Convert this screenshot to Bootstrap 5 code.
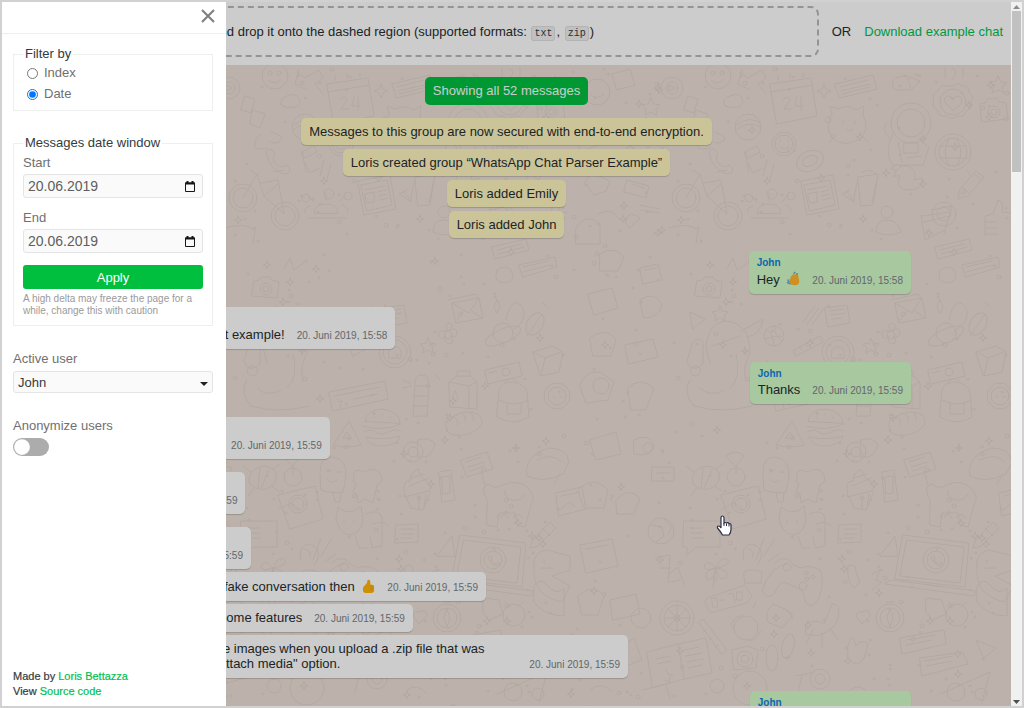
<!DOCTYPE html>
<html lang="en">
<head>
<meta charset="utf-8">
<meta name="viewport" content="width=device-width, initial-scale=1">
<title>WhatsApp Chat Parser</title>
<link href="https://cdn.jsdelivr.net/npm/bootstrap@5.3.0/dist/css/bootstrap.min.css" rel="stylesheet">
<style>
  body { font-family: "Liberation Sans", Arial, sans-serif; font-size: 13px; line-height: 15px; color: #262e30; }
  a { text-decoration: none; color: #00bf4f; }
  .frame { border: 2px solid #d1d1d1; }
  .page-area { background: #ebdfd6; }
  .topbar { background: #fff; padding: 4px 8px 8px; gap: 13px; height: 63px; }
  .dropzone { border: 2px dashed #bababa; border-radius: 8px; padding: 0 6px; height: 51px; cursor: pointer; }
  .dropzone code { font-family: "Liberation Mono", monospace; font-size: 10px; line-height: 12px; color: #353b45; background: #f0f0f0; border: 1px solid #e0e0e0; border-radius: 3px; padding: 1px 2px; margin: 0 1px; }
  .topbar a { color: #00bf4f; }
  .wallpaper { stroke: #e0d4cb; stroke-width: 1; fill: none; }
  .chat { max-width: 809px; padding-top: 12px; }
  .chat-note { border-radius: 5px; padding: 6px 8px; background: #fff5c0; box-shadow: 0 1px 1px #0000002e; }
  .show-all { background: #00bf3f; color: #fff; border: 0; border-radius: 5px; padding: 6px 8px 7px; margin-bottom: 13px; }
  .notes { gap: 4px; margin-bottom: 13px; }
  .bubble { border-radius: 5px; padding: 6px 8px 7px; background: #fff; box-shadow: 0 1px 1px #0000002e; max-width: 526px; }
  .bubble.mine { background: #d2fac8; }
  .bubble-row { gap: 12px; }
  .talk { gap: 13px; }
  .talk .turn { gap: 3px; }
  .sender { font-size: 10px; line-height: 12px; margin-bottom: 2px; font-weight: 700; color: #0f80dc; }
  .sender.loris { color: #d0660e; }
  .sender.emily { color: #8a3fc4; }
  .stamp { font-size: 10px; line-height: 13px; color: #7a8288; white-space: nowrap; }
  .emoji { width: 14px; height: 16px; margin-left: 3px; vertical-align: bottom; }
  .shade { background: rgba(0, 0, 0, .2); z-index: 2; }
  .drawer { width: 224px; z-index: 3; background: #fff; color: #707070; }
  .drawer-head { height: 32px; border-bottom: 1px solid #eee; padding: 0 11px 4px; }
  .drawer-body { padding: 12px 13px 7px 11px; }
  .panel { border: 1px solid #eee; padding: 0 9px; }
  .panel legend { float: none; width: auto; font-size: 13px; line-height: 16px; color: #333b40; padding: 0 2px; margin: 0; }
  .panel-short { padding-bottom: 6px; }
  .choice { height: 21px; gap: 6px; padding-left: 4px; }
  .choice input { width: 11px; height: 11px; margin: 1px 0 0; accent-color: #0075ff; }
  .field, .picker { width: 100%; height: 24px; background: #fafafa; border: 1px solid #e4e4e4; border-radius: 3px; }
  .field { font-size: 14px; color: #5e5e5e; padding: 0 4px; }
  .cal-btn { right: 5px; top: 5px; border: 0; background: none; padding: 0; width: 14px; height: 14px; }
  .cal-btn svg, .close-btn svg { display: block; }
  .apply { width: 100%; height: 24px; background: #00bf3f; color: #fff; border: 0; border-radius: 3px; margin-top: 12px; }
  .hint { font-size: 10px; line-height: 12px; color: #9a9a9a; }
  .picker { appearance: none; height: 22px; color: #333b40; padding: 0 4px; background: #fafafa url("data:image/svg+xml,%3Csvg xmlns='http://www.w3.org/2000/svg' width='8' height='4'%3E%3Cpath d='M0 0h8L4 4z' fill='%23222'/%3E%3C/svg%3E") no-repeat right 4px top 10px; }
  .drawer .toggle { width: 36px; height: 18px; margin: 0; border: 0; background-color: #acacac; background-image: url("data:image/svg+xml,%3Csvg xmlns='http://www.w3.org/2000/svg' viewBox='-4 -4 8 8'%3E%3Ccircle r='3.5' fill='%23fff'/%3E%3C/svg%3E"); }
  .close-btn { border: 0; background: none; padding: 0; }
  .group-gap { margin-top: 24px; }
  .outer-label { margin-top: 25px; margin-bottom: 5px; }
  .credits { font-size: 11px; color: #333b40; -webkit-text-stroke: .2px; }
  .scroller { width: 11px; background: #f1f1f1; padding-top: 3px; padding-bottom: 2px; }
  .scroller-thumb { width: 9px; height: 161px; background: #c1c1c1; margin-top: 2px; }
  .pointer { left: 714px; top: 513px; z-index: 4; }
</style>
</head>
<body>
<div class="frame vh-100 d-flex position-relative overflow-hidden">
  <div class="page-area flex-grow-1 d-flex flex-column position-relative overflow-hidden">
    <header class="topbar d-flex align-items-center flex-shrink-0">
      <div class="dropzone flex-grow-1 d-flex align-items-center text-nowrap overflow-hidden">
        <span>Click here to upload a file or drag and drop it onto the dashed region (supported formats: <code>txt</code>, <code>zip</code>)</span>
      </div>
      <span>OR</span>
      <a href="#" class="text-nowrap">Download example chat</a>
    </header>

    <div class="flex-grow-1 position-relative overflow-hidden">
      <svg class="wallpaper position-absolute top-0 start-0 w-100 h-100" aria-hidden="true">
        <defs>
          <pattern id="doodles" patternUnits="userSpaceOnUse" x="567" y="0" width="443" height="690">
            <g id="tile" stroke-linejoin="round" stroke-linecap="round">
              <g id="art" transform="translate(-569 -65)">
                <!-- faces, calendar, sweets -->
                <circle cx="718" cy="76" r="13"/><circle cx="713" cy="73" r="2"/><circle cx="722" cy="73" r="2"/><path d="M711 80q7 6 13-1"/>
                <circle cx="672" cy="88" r="11"/><circle cx="672" cy="88" r="6"/><path d="M669 85l6 3-6 3z"/>
                <path d="M651 98l3 6 6 1-4 4 1 6-6-3-6 3 1-6-4-4 6-1zM740 72l8 6 14-8 4 8-8 6 8 10M742 70l-4 14 12 6"/>
                <path d="M770 84l41-6 6 38-40 8zM771 92l42-7M778 80v-4M790 78v-4M803 77v-4M783 100q5-6 7 0l-6 9h8M797 97l-2 9h8M801 97v13"/>
                <path d="M835 84l38-9 4 14-37 9zM840 87l28-7M841 91l30-7M842 94l28-7M893 86q-3-8 6-9 8-3 10 5 5 7-4 8h-8q-4 0-4-4M904 75l16 6-10 10M824 84l2 5 5 2-5 2-2 5-2-5-5-2 5-2zM945 68v10M952 68q8 4 0 11M963 68v10"/>
                <path d="M953 86q5-5 9 0 7-1 7 6 6 4 2 10 2 7-5 9-2 7-9 5-6 5-11 0-8 1-9-6-6-4-3-10-3-7 4-9 2-7 10-5zM953 110l-8-7q-2-6 3-7 4 0 5 4 2-5 6-4 5 3 2 8z"/><circle cx="953" cy="102" r="13"/>
                <path d="M980 104l5-1 2-4 10-1 2 4 7 1 2 16-26 3z"/><circle cx="994" cy="112" r="6"/><circle cx="994" cy="112" r="3"/><path d="M998 76l3 6 6 1-5 4 2 6-6-3-6 3 2-7-5-4 7-1z"/>
                <circle cx="748" cy="127" r="13"/><path d="M737 125q12-10 23-2M736 130q12-10 24-3M730 96q8-4 12 2 3 6-3 9-8 2-14-1-4-7 5-10M688 96l10 3-4 14-10-3zM696 110l12 4-5 14-10-4zM704 134q-8 6-6 14 4 2 12 0M714 132q14 4 10 8-6 6-12 1"/>
                <circle cx="784" cy="144" r="12"/><circle cx="784" cy="144" r="9"/><path d="M779 147q5 4 10 0M780 140v2M788 140v2"/><ellipse cx="810" cy="161" rx="14" ry="10" transform="rotate(-24 810 161)"/><ellipse cx="810" cy="161" rx="8" ry="5" transform="rotate(-24 810 161)"/>
                <!-- cat, astronaut, ball -->
                <path d="M832 114l-2-8 8 3q10-5 18 1l8-4-1 9q8 16-5 25-15 8-26-2-8-13 0-24zM843 121v3M855 121v3M846 129q3 4 7 0M834 137l-5 6M862 136l6 6"/><circle cx="828" cy="120" r="3"/>
                <circle cx="911" cy="123" r="20"/><circle cx="911" cy="123" r="14"/><path d="M893 133q-10 22 0 32h30l6-18-8-6M898 142l4 20M904 143h14v10h-14zM887 122q-6 8 2 16M907 158l14-2"/>
                <circle cx="953" cy="152" r="18"/><circle cx="953" cy="152" r="14"/><path d="M940 146h26M940 158h27M949 139q-8 13 0 27M957 139q8 13 0 27"/>
                <path d="M710 156q-3-7 4-7l4 5-2 5q2 6 9 8l4-2 4 4q-1 7-9 4-11-5-14-17M745 152l12-6 3 6-12 6zM748 163l5 10 10-5M767 160l-4 16M774 164l-4 15M745 152l4 20"/>
                <path d="M801 181l32-6 6 34-32 6zM804 185l26-5 5 25-25 6zM807 190l20-4M808 194l9-2v10l-7 1zM821 192l8-2M822 196l8-2M823 200l8-2"/>
                <path d="M858 177l20-3-5 31-12 1zM858 180q-4 14-4 21l-8-10M878 176l-6 26M862 172q8-4 14 2M850 190l-8 4 12 8M894 176q3-12 14-10 10 5 6 14l8-2q2 12-14 12-14-1-8-14zM896 171l-5-3 4-2"/>
                <path d="M960 189l16-18 8 6-16 19-10 3zM974 174l8 6M962 187l7 6M967 171l4 5"/>
                <circle cx="686" cy="198" r="14"/><circle cx="686" cy="198" r="10"/><circle cx="728" cy="216" r="14"/><circle cx="728" cy="216" r="10"/><path d="M686 198l14-24 7 22 20 18-6-34-17 3M699 174l-6-4M717 172l10-2M707 196l14-12"/>
                <path d="M757 213q0-9 12-9t12 9zM748 213q-2-5 5-7M791 212q0-6-6-7M769 200v-7M757 202l-6-6M782 202l5-6M751 218h38"/><circle cx="772" cy="194" r="5"/><circle cx="749" cy="198" r="4"/><circle cx="791" cy="196" r="4"/>
                <path d="M627 180l22 6-3 12-22-6zM632 184l12 4M640 205l20 4M641 210l18 3M668 228q20-6 30 2l-2 14M640 218l-10 10q-8-6-2-12 4-4 12 2M585 182l7-9 18 8-4 10-12 4zM598 214q14-8 20 4"/>
                <path d="M922 216l28-4M924 222l26-6M921 215l4 25 20-10M932 210l20-4-8 28"/><circle cx="944" cy="214" r="12"/><circle cx="944" cy="214" r="7"/><circle cx="887" cy="212" r="6"/><path d="M876 232q0-12 11-12t14 12q-12 6-25 0M985 236v-20l8-2 5-14q6 1 4 12l8 1M985 222h10M986 228h12M986 234h12"/>
                <!-- cards, camera, letters -->
                <path d="M935 247l34-8 3 11-34 9zM940 250l24-6M941 254l26-7M962 265l36-8 2 10-34 10zM966 267l26-6M966 272l28-7M940 270q8-6 14 0 6 10-5 13-14 0-9-13M697 281l5-1 2-3h9l2 3 7 2-2 16-25-2zM727 268l6-10 4 12 10-7M640 268l18-4 4 16-19 4zM645 270l11-2M600 254q14-9 24 3l-6 14h-18z"/><circle cx="709" cy="289" r="6"/><circle cx="709" cy="289" r="3"/>
                <path d="M720 306l2 5 6 1-4 4 1 5-5-3-5 3 1-5-4-4 6-1zM690 312l15 7-12 10zM803 322l12-16M807 324l12-16M812 325l11-16M825 308l22-3 3 18-22 4zM830 311l14-2M831 315l14-2M832 319l9-1"/>
                <path d="M895 303l27-5 4 20-27 5zM895 303l17 10 10-15M891 300l27-6 3 4M900 320l8-10M915 311l10 7M937 307l3-8 3 8-3 6zM949 320q2-14 10-18 9 4 8 14-2 10-12 14"/>
                <ellipse cx="946" cy="336" rx="19" ry="7" transform="rotate(-24 946 336)"/><circle cx="946" cy="333" r="10"/><ellipse cx="978" cy="324" rx="8" ry="12" transform="rotate(30 978 324)"/><path d="M970 336l15-22M985 302l5 5"/>
                <circle cx="891" cy="335" r="4"/><path d="M891 331q-5-8 2-8 5 2-1 8 8-5 8 2-1 6-7 3 6 7-1 8-6-2-3-8-6 5-7-1-1-6 7-4M871 338l2 5 6 1-4 4 1 5-5-3-5 3 1-5-4-4 6-1z"/>
                <circle cx="774" cy="336" r="10"/><path d="M766 330q8 2 8 16M765 339q9-4 17-3M774 326q1 10 8 15"/><circle cx="838" cy="352" r="16"/><circle cx="838" cy="352" r="12"/><path d="M832 350q6-7 12 0v8h-12zM794 350l26-14 3 6-27 14zM800 347l2 3M806 344l2 3M812 341l2 3"/>
                <path d="M706 347q2-24 20-26 24 2 24 32-8 14-4 28M712 346l28-10M706 347l4 16M741 331l22-12q-2 16-16 18M693 342q6-6 10 0v22q-10 10-16-2zM695 366a5 5 0 1 0 1 10 5 5 0 0 0-1-10M690 380q-8 12 4 26 28 8 58 0M736 354q6 24-6 34M700 388q10 10 24 2"/>
                <path d="M976 352l20-6 10 6-4 20-18 4zM976 352l12 6 16-6M988 358l-4 18M928 370l34-8 3 14-34 8zM932 373l8-2"/><circle cx="949" cy="372" r="4"/>
                <path d="M942 390q2-8 14-8 12 2 14 10l2 25q-16 10-32 0zM942 400q14 8 30 0M950 404v10h14v-11M948 383q4-8 12-2"/><circle cx="1000" cy="396" r="13"/><circle cx="1000" cy="396" r="9"/><path d="M996 397h2M1003 397h2"/>
                <!-- food -->
                <path d="M772 392l56-11 3 18-55 12zM777 396l46-9M797 399l24-5M780 398l2 4 4-1-3 3 1 4M865 375q7 0 7 9l-2 32h-14l2-32q0-9 7-9M858 386h14M857 396h14M856 406h14M846 380l8 4M846 388l8-2M878 374l5 6"/>
                <path d="M892 382l8-6h14l6 7v26l-27-2zM892 382l20 4 8-4M912 386v23M898 391l-3 7q3 5 6 0zM900 376v-5h13v5"/>
                <path d="M808 421q2-12 18-12 17 3 17 14zM806 426q20 6 38-2M807 432q8-4 12 0t12 0 12-1M809 437q18 4 34-1-2 9-17 10-15 0-17-9M817 417v1M825 414v1M833 417v1"/>
                <path d="M889 428q-2-8 8-12 12-7 24-2 7 6 2 13-10 10-26 8-8-2-8-7M898 417q4 5 2 8M906 414q4 5 2 8M914 413q4 5 2 8M776 445l16-24 12 24q-14 4-28 0M786 438l4-6 4 6zM861 440q10-4 17 4-4 15-14 13-6-6-3-17"/><circle cx="856" cy="452" r="10"/><circle cx="856" cy="452" r="5"/>
                <!-- ice cream, bear, cupcake -->
                <path d="M763 472q0-16 13-15 14 2 13 19l-3 16q-12 2-22-2zM776 492l2 10h5l1-9M770 470h4M780 472h4M770 479q5 6 10 1M797 478q-2-7 5-8 4 2 6 2 8-6 15 1 5 8-3 12l-4 18-8-4-7 4-1-9-4-2 3-8q-4-2-2-6"/>
                <path d="M847 489q-1-8 6-8 0-8 8-12 3 10 10 13 5 6 0 9l-23 6zM848 495l6 13 12 2 8-19M852 486l20-8M854 478l13-4M862 496v13M869 494l-2 13M882 472l12-2 4 30-13 2zM885 477l8-1v17l-7 1zM904 460l26-8 6 17-26 8zM909 462l15-5M911 467l17-5M913 471l14-5"/>
                <path d="M970 476q-4-20 22-28 18 0 20 14l-6 12q-20 10-36 2M980 460q16-8 24 2M1003 474l-6 10M697 470q10-8 20 0 6 8-2 16-12 8-22-2-3-8 4-14M694 472l-8-6M715 470l8-6M714 486l8 5M697 488l-6 8M703 468l-2 20M712 470l-8 18M726 456q10-8 18 0l-8 10zM736 466v8"/><circle cx="736" cy="477" r="9"/><path d="M652 467h22v14h-22zM656 473h14"/>
                <path d="M721 495l37-9 8 33-33 10zM722 509l12-6 8 6"/><circle cx="741" cy="504" r="9"/><circle cx="741" cy="504" r="6"/><path d="M779 519l2-12 8 5 8-1 7-5 2 14q-2 14-14 15-10-2-13-16M787 521v2M797 520v2M809 514q14-6 16 4v28l-10 2-2-12M816 524q10-4 16 2M798 536l4 12h8"/>
                <path d="M930 500q-8-14 2-16 6 6 14 1 14-6 24 2 10 10 4 18l-6 22-8-2-2-12h-16l-2 14-10-2zM928 485l-4-14M948 490a10 8 0 1 0 20 4M944 518q2-7 8 0M956 518q4-7 10 0M999 493l26-6 4 22-27 7zM1004 496l19-4M1003 510l9-8 6 5"/>
                <circle cx="661" cy="531" r="13"/><path d="M652 525l10 2 2 9-8 6M664 519l8 8-4 8M684 521h36v26h-24l-9 8v-8h-4zM690 528h12M691 533h12M692 538h12M839 525l22-1v18l-23 1zM844 529h13M844 534h13M844 538h10M880 556l15-20 3 20z"/>
                <!-- laptop, gamepad -->
                <path d="M903 535l66 8-4 44-70-8zM907 540l57 7-4 36-60-7zM891 580l85 11-2 5-89-12zM924 584l18 3"/><circle cx="936" cy="560" r="13"/><circle cx="936" cy="560" r="9"/><path d="M931 558q1-4 4-1l-1 3q2 4 5 4l3-2 1 3q-7 3-12-7M976 540l17-18 6 6-18 18-8 2zM985 528l8 8M977 560q6-14 20-8l16 4v14l-18 6 18 10-8 16q-28-6-28-30zM984 568h12M987 560v3"/>
                <path d="M744 560q-4-14 8-16 12 4 9 14l-4 8M748 549q6 0 5 8M756 560l8-22M764 556l10-16M768 562l11-8M744 572q8-4 18 0l-1 11h-16zM775 564q4-8 14-4 4 6 12 8 10-4 20 3 3 14-2 27-6 12-13 5l-4-13-18-8q-6 2-9 11-8 8-13-2 8-25 25-27"/><circle cx="787" cy="567" r="4"/><circle cx="803" cy="586" r="4"/><circle cx="806" cy="573" r="2"/><circle cx="813" cy="577" r="2"/><path d="M848 566q8-4 8 6l4 10-6 6q-8-8-6-22M872 574l8-4-4 10 6 2-10 8"/>
                <path d="M655 558l15-3-2 28M660 568h10M668 575l10-8 6 18M670 582l10-2M716 568q-8-10-12-2 0 6 12 2-12 2-10 10 6 6 10-10 2 14 10 10 4-8-10-10 14-2 12-8-6-6-12 8M716 568l-3 20"/>
                <path d="M707 598l38-13 7 11-5 7-37 10-5-10zM712 598h5l1 9h-5zM720 600h4M728 594l5-1 2 10M737 592h5v8h-5zM753 608l3-6"/>
                <circle cx="677" cy="618" r="17"/><circle cx="677" cy="618" r="13"/><circle cx="677" cy="618" r="3"/><path d="M677 605v26M664 618h26M668 609l18 18M686 609l-18 18M699 622l4-3 24 31-5 4zM706 630l-3 2M712 638l-3 2M718 645l-3 2"/>
                <circle cx="746" cy="628" r="12"/><path d="M731 624q6-10 12-8M761 631q-6 12-14 9M731 624l4 8M773 604l14 6 5 6-10 12-14-6q-4-10 5-18M786 611q8 0 6 8M806 624q10-6 18 0l8-20q10 0 6 14-3 10-12 14-8 6-20 2zM814 628l-8 16M822 632v16M830 628l8 12"/>
                <circle cx="890" cy="618" r="14"/><circle cx="890" cy="618" r="10"/><path d="M890 609l3 9-3 9-3-9zM886 602h8M862 612q8-4 8 4l-8 8-6-8q1-6 6-4M926 598l16 2 4 14-14 6-6-8z"/><circle cx="957" cy="615" r="11"/><path d="M948 602l5 5M966 602l-5 5M977 586q6-10 14 0t16 2v28q-20 0-30-14z"/>
                <path d="M900 638l44-8 2 14-44 10zM906 640l30-5M906 645l26-5M920 658l43-6 5 12-46 12zM925 661l28-5M926 666l26-5M976 640l20 8-12 10zM848 646q4-16 8 0 6-8 12-2-2 8-4 14-6 12-16 0z"/>
                <path d="M647 652l31-8 28-6 6 35-28 6-31 9zM678 644l6 35M656 659l14-3M657 664l14-3M666 670l2 4 5 1-4 3 1 5-5-3M685 650l14-3M686 656l16-3M687 662l16-3M688 668l14-3M732 650l16-4 10 4-2 18-22 2z"/><circle cx="745" cy="659" r="8"/><circle cx="745" cy="659" r="4"/><ellipse cx="772" cy="658" rx="6" ry="13"/><ellipse cx="788" cy="646" rx="6" ry="12" transform="rotate(15 788 646)"/>
                <circle cx="820" cy="679" r="10"/><circle cx="820" cy="679" r="5"/><circle cx="750" cy="688" r="17"/><circle cx="717" cy="686" r="7"/><path d="M796 676l18-4M802 676l-4 16M940 694l50-22-8 30M642 690l24-6 4 14M850 690q10-8 20 4"/><circle cx="956" cy="692" r="9"/><circle cx="981" cy="694" r="6"/>
                <!-- items on the left of the tile -->
                <circle cx="597" cy="92" r="13"/><path d="M590 94q7 7 14 0M612 74l18-5 5 16-18 5zM575 134l20-8 6 18-20 7zM610 138l16-18 6 6-15 17zM576 228q10-16 24-4v20h-24zM588 294l24-6 6 20-24 7zM640 300q14-10 22 4-2 14-18 14zM590 338q16-12 26 2l-5 16h-18zM625 345l28-6 5 18-29 7zM580 386q4-16 20-14l14 10-6 18-22 3zM628 388q12-12 26 0l-8 22h-15zM590 440l26-8 5 22-25 6zM634 440q16-8 20 6-4 12-20 8zM578 490q16-16 30 0l-4 18h-20zM616 500q12-14 24-2l-6 16h-17zM580 545l32-6 6 27-32 7zM586 549l22-4M578 596q15-14 26 0l-6 19h-16zM610 600l26-6 4 20-27 6zM580 650q16-12 27 2l-6 17h-18zM615 650l19-12 8 22-19 7zM590 690q12-10 22 2"/><circle cx="641" cy="618" r="10"/><circle cx="601" cy="386" r="8"/><circle cx="648" cy="448" r="5"/>
                <g id="specks"></g>
              </g>
            </g>
            <use href="#art" x="-443"/><use href="#art" x="443"/>
          </pattern>
        </defs>
        <rect width="100%" height="100%" fill="url(#doodles)" stroke="none"/>
      </svg>

      <main class="chat mx-auto position-relative d-flex flex-column">
        <button type="button" class="show-all align-self-center">Showing all 52 messages</button>
        <div class="notes d-flex flex-column align-items-center">
          <div class="chat-note">Messages to this group are now secured with end-to-end encryption.</div>
          <div class="chat-note">Loris created group “WhatsApp Chat Parser Example”</div>
          <div class="chat-note">Loris added Emily</div>
          <div class="chat-note">Loris added John</div>
        </div>
        <div class="talk d-flex flex-column">
          <div class="bubble mine align-self-end">
            <div class="sender">John</div>
            <div class="bubble-row d-flex align-items-end"><span>Hey <svg class="emoji" viewBox="0 0 15 17" role="img" aria-label="waving hand"><path d="M6 5q1-2 3-1l1-1q3-1 3 2l1 4q1 5-3 6-4 1-7-2-2-2 0-3-1-2 1-2-1-2 1-3" fill="#ffb62a"/><path d="M8 3l2-2M12 4V2M2 9l1 3M1 12l4 2" stroke="#6aa5df" stroke-width="1.500" fill="none"/></svg></span><time class="stamp">20. Juni 2019, 15:58</time></div>
          </div>
          <div class="bubble align-self-start">
            <div class="sender loris">Loris</div>
            <div class="bubble-row d-flex align-items-end"><span>Welcome to the chat example!</span><time class="stamp">20. Juni 2019, 15:58</time></div>
          </div>
          <div class="bubble mine align-self-end">
            <div class="sender">John</div>
            <div class="bubble-row d-flex align-items-end"><span>Thanks</span><time class="stamp">20. Juni 2019, 15:59</time></div>
          </div>
          <div class="bubble align-self-start">
            <div class="sender emily">Emily</div>
            <div class="bubble-row d-flex align-items-end"><span>It works really well!</span><time class="stamp">20. Juni 2019, 15:59</time></div>
          </div>
          <div class="bubble align-self-start">
            <div class="sender loris">Loris</div>
            <div class="bubble-row d-flex align-items-end"><span>Yes!</span><time class="stamp">20. Juni 2019, 15:59</time></div>
          </div>
          <div class="turn d-flex flex-column align-items-start">
            <div class="bubble">
              <div class="sender emily">Emily</div>
              <div class="bubble-row d-flex align-items-end"><span>Okay</span><time class="stamp">20. Juni 2019, 15:59</time></div>
            </div>
            <div class="bubble">
              <div class="bubble-row d-flex align-items-end"><span>We can just have a fake conversation then <svg class="emoji" viewBox="0 0 15 17" role="img" aria-label="thumbs up"><path d="M4 8q3-2 3-6 3-1 3 2v3q4 0 4 2v5q-1 2-4 2H5q-3 0-3-4 0-3 2-4" fill="#ffb60a"/><path d="M10 9h3M10 11h3M10 13h3" stroke="#e59a00" stroke-width=".6"/></svg></span><time class="stamp">20. Juni 2019, 15:59</time></div>
            </div>
            <div class="bubble">
              <div class="bubble-row d-flex align-items-end"><span>I will tell you about some features</span><time class="stamp">20. Juni 2019, 15:59</time></div>
            </div>
            <div class="bubble">
              <div class="bubble-row d-flex align-items-end"><span>You can also see the images when you upload a .zip file that was exported with the "Attach media" option.</span><time class="stamp">20. Juni 2019, 15:59</time></div>
            </div>
          </div>
          <div class="bubble mine align-self-end">
            <div class="sender">John</div>
            <div class="bubble-row d-flex align-items-end"><span>Thanks</span><time class="stamp">20. Juni 2019, 15:59</time></div>
          </div>
        </div>
      </main>
    </div>
    <div class="shade position-absolute top-0 start-0 w-100 h-100"></div>
  </div>

  <div class="scroller d-flex flex-column align-items-center flex-shrink-0" aria-hidden="true">
    <svg width="7" height="4"><path d="M0 4h7L3.500 0z" fill="#8c8c8c"/></svg>
    <div class="scroller-thumb"></div>
    <svg class="mt-auto" width="7" height="4"><path d="M0 0h7L3.500 4z" fill="#505050"/></svg>
  </div>

  <aside class="drawer position-absolute top-0 start-0 h-100 d-flex flex-column">
    <div class="drawer-head d-flex align-items-center justify-content-end flex-shrink-0">
      <button type="button" class="close-btn" aria-label="Close menu"><svg width="14" height="14" stroke="#7d7d7d" stroke-width="2"><path d="M1 1l12 12M13 1L1 13"/></svg></button>
    </div>
    <form class="drawer-body flex-grow-1 d-flex flex-column">
      <fieldset class="panel panel-short">
        <legend>Filter by</legend>
        <div class="choice d-flex align-items-center"><input type="radio" name="filter" id="byIndex"><label for="byIndex">Index</label></div>
        <div class="choice d-flex align-items-center"><input type="radio" name="filter" id="byDate" checked><label for="byDate">Date</label></div>
      </fieldset>
      <fieldset class="panel group-gap pb-2">
        <legend>Messages date window</legend>
        <label for="start" class="d-block mt-1 mb-1">Start</label>
        <div class="position-relative">
          <input class="field" id="start" type="text" value="20.06.2019">
          <button type="button" class="cal-btn position-absolute" aria-label="Choose start date"><svg width="12" height="13" fill="none" stroke="#161616"><path d="M1.500 3v8.500h9V3z"/><path d="M1 3.500h10M3.500 1v2M8.500 1v2" stroke-width="2"/></svg></button>
        </div>
        <label for="end" class="d-block mt-2 pt-1 mb-1">End</label>
        <div class="position-relative">
          <input class="field" id="end" type="text" value="20.06.2019">
          <button type="button" class="cal-btn position-absolute" aria-label="Choose end date"><svg width="12" height="13" fill="none" stroke="#161616"><path d="M1.500 3v8.500h9V3z"/><path d="M1 3.500h10M3.500 1v2M8.500 1v2" stroke-width="2"/></svg></button>
        </div>
        <button type="button" class="apply">Apply</button>
        <div class="hint mt-1">A high delta may freeze the page for a while, change this with caution</div>
      </fieldset>
      <label for="user" class="outer-label">Active user</label>
      <select class="picker" id="user"><option>John</option><option>Emily</option><option>Loris</option></select>
      <label for="anon" class="outer-label">Anonymize users</label>
      <div class="form-switch p-0 m-0 lh-1"><input class="form-check-input toggle float-none d-block" type="checkbox" role="switch" id="anon"></div>
      <div class="credits mt-auto">
        <div>Made by <a href="#">Loris Bettazza</a></div>
        <div>View <a href="#">Source code</a></div>
      </div>
    </form>
  </aside>

  <svg class="pointer position-absolute" width="16" height="22" viewBox="0 0 16 22" aria-hidden="true"><path d="M5 12V3q0-2 1.500-2T8 3v5q1-1 2.500 0 1.500-.8 2.500.6 2-.3 2 1.900v4q0 3-2 5.500H6.500Q5 17 1.500 13q-.5-2 1-2T5 13z" fill="#fff" stroke="#2b2f45" stroke-width="1.200"/><path d="M8 8v3M10.500 8.500V11M13 9v2.500" stroke="#2b2f45"/></svg>
</div>
<script src="https://cdn.jsdelivr.net/npm/bootstrap@5.3.0/dist/js/bootstrap.bundle.min.js"></script>
<script>
  // Scatter small rings and stars between the doodles, the same on every load.
  let seed = 7;
  const rnd = () => (seed = seed * 16807 % 2147483647) / 2147483647;
  let marks = '';
  for (let i = 0; i < 420; i++) {
    const x = Math.round(571 + rnd() * 438), y = Math.round(68 + rnd() * 680);
    marks += i % 6 ? `<circle cx="${x}" cy="${y}" r="${i % 3 ? 1 : 2}"/>` : `<path d="M${x} ${y - 4}l1 3 3 1-3 1-1 3-1-3-3-1 3-1z"/>`;
  }
  document.getElementById('specks').innerHTML = marks;
</script>
</body>
</html>
